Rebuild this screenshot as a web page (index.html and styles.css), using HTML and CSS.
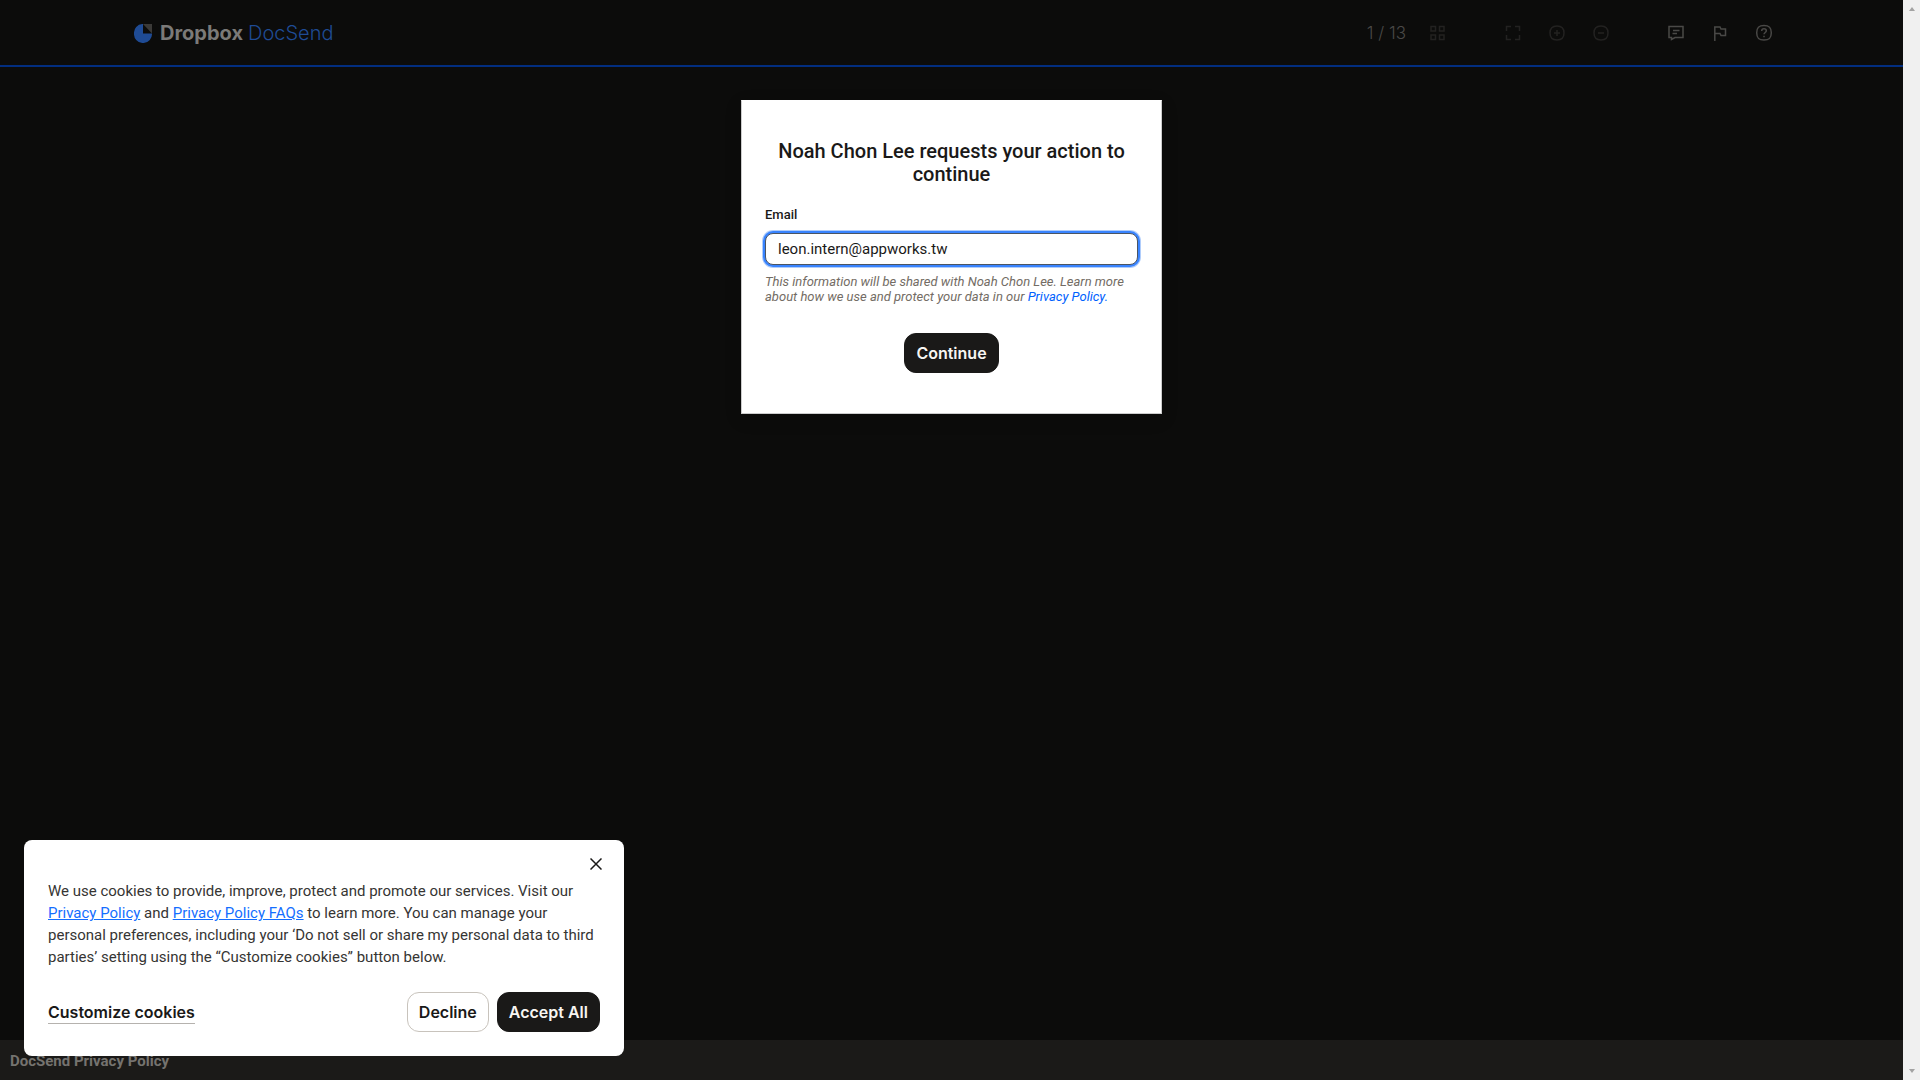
FILE: index.html
```html
<!DOCTYPE html>
<html lang="en">
<head>
<meta charset="utf-8">
<title>Dropbox DocSend</title>
<link rel="stylesheet" href="styles.css">
</head>
<body>
<div class="viewer">
  <header class="toolbar">
    <a class="brand" href="#">
      <svg class="brand-mark" viewBox="0 0 18 19" aria-hidden="true"><path fill="#1f4b94" d="M9 0v9.500h9A9 9.300 0 0 1 15.800 16 8.500 8.500 0 0 1 9 19 8.500 8.500 0 0 1 2.200 16 9 9 0 0 1 0 9.500 9 9 0 0 1 2.200 3 8.500 8.500 0 0 1 9 0z"/><path fill="#3b3a38" d="M9 0h9v9.500z"/></svg>
      <span class="brand-name">Dropbox</span>
      <span class="brand-product">DocSend</span>
    </a>
    <nav class="tools" aria-label="Document tools">
      <div class="tool-group pages">
        <span class="page-count">1 / 13</span>
        <button class="tool" type="button" aria-label="Thumbnails"><svg viewBox="0 0 24 24"><path d="M5 5.500h4.500v4.500H5zM13.500 5.500H18v4.500h-4.500zM5 14h4.500v4.500H5zM13.500 14H18v4.500h-4.500z"/></svg></button>
      </div>
      <div class="tool-group">
        <button class="tool" type="button" aria-label="Full screen"><svg viewBox="0 0 24 24"><path d="M5.500 10V5.500H10M14 5.500h4.500V10M18.500 14v4.500H14M10 18.500H5.500V14"/></svg></button>
        <button class="tool" type="button" aria-label="Zoom in"><svg viewBox="0 0 24 24"><path d="M12 5c5 0 7 2 7 7s-2 7-7 7-7-2-7-7 2-7 7-7zM12 9v6M9 12h6"/></svg></button>
        <button class="tool" type="button" aria-label="Zoom out"><svg viewBox="0 0 24 24"><path d="M12 5c5 0 7 2 7 7s-2 7-7 7-7-2-7-7 2-7 7-7zM9 12h6"/></svg></button>
      </div>
      <div class="tool-group bright">
        <button class="tool" type="button" aria-label="Comment"><svg viewBox="0 0 24 24"><path d="M5 5.500h14v11h-8L7.500 18.500v-2H5zM9 9.500h6.500M8.500 12.500h4.500"/></svg></button>
        <button class="tool" type="button" aria-label="Report"><svg viewBox="0 0 24 24"><path d="M6.800 20V6H12l1 2h4.500v6.500H13l-1-2H6.800"/></svg></button>
        <button class="tool" type="button" aria-label="Help"><svg viewBox="0 0 24 24"><path d="M12 4.500c5.300 0 7.300 2 7.300 7.300s-2 7.300-7.300 7.300-7.300-2-7.300-7.300 2-7.300 7.300-7.300zM9.700 10c0-1.500 1-2.200 2.300-2.200s2.300.7 2.300 2c0 1.700-2.300 1.700-2.300 3.500M12 14.700v1.500"/></svg></button>
      </div>
    </nav>
  </header>

  <main class="stage">
    <form class="dialog">
      <h1 class="dialog-title">Noah Chon Lee requests your action to continue</h1>
      <label class="field-label" for="email">Email</label>
      <input class="field-input" id="email" type="email" value="leon.intern@appworks.tw">
      <p class="field-note">This information will be shared with Noah Chon Lee. Learn more about how we use and protect your data in our <a href="#">Privacy Policy.</a></p>
      <button class="button button-solid" type="button">Continue</button>
    </form>
  </main>

  <footer class="footer"><a href="#">DocSend Privacy Policy</a></footer>

  <section class="cookies" aria-label="Cookie notice">
    <button class="cookies-close" type="button" aria-label="Close"><svg viewBox="0 0 12 12"><path d="M.5.500l11 11M11.500.500l-11 11"/></svg></button>
    <p class="cookies-text">We use cookies to provide, improve, protect and promote our services. Visit our <a href="#">Privacy Policy</a> and <a href="#">Privacy Policy FAQs</a> to learn more. You can manage your personal preferences, including your ‘Do not sell or share my personal data to third parties’ setting using the “Customize cookies” button below.</p>
    <div class="cookies-actions">
      <button class="cookies-customize" type="button">Customize cookies</button>
      <button class="button button-outline" type="button">Decline</button>
      <button class="button button-solid" type="button">Accept All</button>
    </div>
  </section>
</div>
<div class="scrollbar" aria-hidden="true">
  <svg viewBox="0 0 6 4"><path d="M3 0l3 4H0z"/></svg>
  <svg viewBox="0 0 6 4"><path d="M0 0h6L3 4z"/></svg>
</div>
</body>
</html>
```
FILE: styles.css
```css
* { box-sizing: border-box; }

body {
  margin: 0;
  min-height: 100vh;
  display: flex;
  background: #0c0c0b;
  font-family: Roboto, "Liberation Sans", sans-serif;
  color: #1a1918;
}

button { font: inherit; cursor: pointer; }

.viewer {
  flex: 1;
  display: flex;
  flex-direction: column;
}

/* Toolbar */
.toolbar {
  display: flex;
  align-items: center;
  justify-content: space-between;
  height: 67px;
  padding: 1px 127px 0 134px;
  border-bottom: 2px solid #022e80;
}

.brand {
  display: flex;
  align-items: center;
  gap: 5px;
  font: 20px/24px Inter, sans-serif;
  text-decoration: none;
}

.brand-mark { width: 18px; height: 19px; margin-right: 3px; }
.brand-name { font-weight: 700; color: #7b7a78; }
.brand-product { font-weight: 300; color: #1f4b94; }

.tools { display: flex; align-items: center; gap: 51px; }
.tool-group { display: flex; align-items: center; gap: 20px; color: #232221; }
.tool-group.bright { color: #4a4947; }

.page-count {
  font: 300 17px/24px Inter, sans-serif;
  color: #4a4947;
}

.tool {
  width: 24px;
  height: 24px;
  padding: 0;
  border: 0;
  background: none;
  color: inherit;
}

.tool svg {
  display: block;
  width: 24px;
  height: 24px;
  fill: none;
  stroke: currentColor;
  stroke-width: 1.5;
}

/* Email request */
.stage {
  flex: 1;
  display: flex;
  justify-content: center;
  align-items: flex-start;
  padding: 33px 24px;
}

.dialog {
  display: flex;
  flex-direction: column;
  width: 421px;
  padding: 39px 23px;
  background: #fff;
  border: 1px solid #ccc;
  border-top-color: #fff;
  box-shadow: 0 5px 15px rgba(0, 0, 0, 0.2);
}

.dialog-title {
  margin: 0 0 21px;
  font-size: 20px;
  line-height: 23px;
  font-weight: 500;
  text-align: center;
}

.field-label {
  margin-bottom: 10px;
  font-size: 13px;
  line-height: 16px;
  font-weight: 500;
}

.field-input {
  height: 32px;
  padding: 0 12px;
  border: 1px solid #4b5563;
  border-radius: 8px;
  outline: 0;
  box-shadow: 0 0 0 2px #3984ff, 0 0 0 3px #b0cdfb;
  font: 15px/20px Roboto, sans-serif;
  color: #1a1918;
}

.field-note {
  margin: 9px 0 29px;
  font-size: 13px;
  line-height: 15px;
  font-style: italic;
  color: #736c64;
}

.field-note a { color: #0061fe; text-decoration: none; }

.dialog .button { align-self: center; margin-bottom: 1px; }

.button {
  height: 40px;
  padding: 0 11px;
  border: 1px solid #1a1918;
  border-radius: 12px;
  font: 600 16px/24px Inter, sans-serif;
}

.button-solid { background: #1a1918; color: #f7f5f2; }
.button-outline { background: #fff; border-color: #c8c3bc; color: #1a1918; }

/* Footer */
.footer {
  height: 40px;
  padding: 11px 10px 9px;
  background: #1b1a18;
  font-size: 15px;
  line-height: 20px;
  font-weight: 700;
}

.footer a { color: #75736f; text-decoration: none; }

/* Cookie notice floats over the page corner */
.cookies {
  position: fixed;
  left: 24px;
  bottom: 24px;
  display: flex;
  flex-direction: column;
  width: 600px;
  padding: 16px 24px 24px;
  border-radius: 8px;
  background: #fff;
}

.cookies-close {
  align-self: flex-end;
  width: 16px;
  height: 16px;
  margin-right: -4px;
  padding: 2px;
  border: 0;
  background: none;
}

.cookies-close svg {
  display: block;
  width: 12px;
  height: 12px;
  stroke: #1a1918;
  stroke-width: 1.5;
}

.cookies-text {
  margin: 8px 0 24px;
  font-size: 15px;
  line-height: 22px;
  color: #363533;
}

.cookies-text a { color: #146eff; }

.cookies-actions { display: flex; align-items: center; gap: 8px; }

.cookies-customize {
  margin-right: auto;
  padding: 0;
  border: 0;
  border-bottom: 1px solid #b5b2ae;
  background: none;
  font: 600 16px/22px Inter, sans-serif;
  color: #1a1918;
}

/* Scroll track */
.scrollbar {
  display: flex;
  flex-direction: column;
  justify-content: space-between;
  align-items: center;
  width: 17px;
  padding: 7px 0;
  background: #f0f0f0;
}

.scrollbar svg { width: 6px; height: 4px; fill: #a3a3a3; }
```
